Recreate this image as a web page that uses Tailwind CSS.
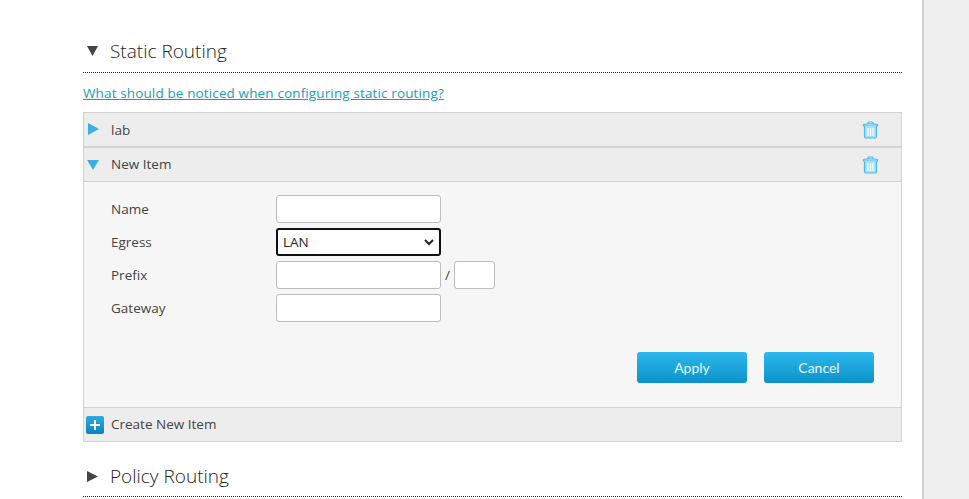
<!DOCTYPE html>
<html>
<head>
<script src="https://cdn.jsdelivr.net/npm/@tailwindcss/browser@4"></script>
</head>
<body class="m-0 overflow-hidden bg-[#f0f0f0] font-['Open_Sans',sans-serif] text-[#333]">
<div class="h-[499px] w-[969px] overflow-hidden">
  <div class="h-full w-[924px] border-r-[2px] border-[#d0d0d0] bg-white pl-[83px] pt-[30px]">
    <div class="w-[819px]">
      <div class="flex h-[43px] items-center border-b border-dotted border-[#222]">
        <svg class="ml-[4px] h-[10px] w-[11px]" viewBox="0 0 11 10"><path d="M0 0H11L5.500 10Z" fill="#444"/></svg>
        <span class="ml-[12px] text-[19px] font-light text-[#222]">Static Routing</span>
      </div>
      <a class="mt-[11px] block h-[18px] text-[13.500px] leading-[18px] tracking-[0.13px] text-[#1b9cb8] underline">What should be noticed when configuring static routing?</a>
      <div class="mt-[10px] border border-[#d2d2d2]">
        <div class="flex h-[35px] items-center border-b-[2px] border-[#d2d2d2] bg-[#ededed]">
          <svg class="mb-[2px] ml-[4px] h-[12px] w-[11px]" viewBox="0 0 11 12"><path d="M0 0L11 6L0 12Z" fill="#3cb0e4"/></svg>
          <span class="ml-[12px] pt-[2px] text-[13.500px] text-[#444]">lab</span>
          <svg class="ml-auto mr-[22px] h-[18px] w-[17px]" viewBox="0 0 17 18" fill="none" stroke="#4fb9e6" stroke-width="1.200"><path d="M1 4H16M6 3.500V2Q6 1 7 1H10Q11 1 11 2V3.500" /><path d="M1.500 3.500Q8.500 2 15.500 3.500V5H1.500Z" fill="#c4e9f8"/><path d="M2.500 5V15.500Q2.500 17 4 17H13Q14.500 17 14.500 15.500V5" fill="#a9e0f7"/><path d="M6 7V15M8.500 7V15M11 7V15" stroke="#fff"/></svg>
        </div>
        <div class="flex h-[34px] items-center border-b border-[#d2d2d2] bg-[#ededed]">
          <svg class="ml-[3px] h-[10px] w-[12px]" viewBox="0 0 12 10"><path d="M0 0H12L6 10Z" fill="#3cb0e4"/></svg>
          <span class="ml-[12px] text-[13.500px] text-[#444]">New Item</span>
          <svg class="ml-auto mr-[22px] h-[18px] w-[17px]" viewBox="0 0 17 18" fill="none" stroke="#4fb9e6" stroke-width="1.200"><path d="M1 4H16M6 3.500V2Q6 1 7 1H10Q11 1 11 2V3.500" /><path d="M1.500 3.500Q8.500 2 15.500 3.500V5H1.500Z" fill="#c4e9f8"/><path d="M2.500 5V15.500Q2.500 17 4 17H13Q14.500 17 14.500 15.500V5" fill="#a9e0f7"/><path d="M6 7V15M8.500 7V15M11 7V15" stroke="#fff"/></svg>
        </div>
        <div class="h-[226px] border-b border-[#d2d2d2] bg-[#f6f6f6] pl-[27px] pt-[13px]">
          <div class="grid grid-cols-[165px_1fr] gap-y-[5px] text-[13.500px] text-[#444]">
            <div class="flex h-[28px] items-center pt-[1px]">Name</div>
            <div><div class="h-[28px] w-[165px] rounded-[3px] border border-[#bdbdbd] bg-white"></div></div>
            <div class="flex h-[28px] items-center pt-[1px]">Egress</div>
            <div class="flex h-[28px] w-[165px] items-center justify-between rounded-[3px] border-[2px] border-[#111] bg-white pl-[5px] pr-[5px] text-[#222]">
              <span>LAN</span>
              <svg class="h-[7px] w-[10px]" viewBox="0 0 10 7" fill="none" stroke="#222" stroke-width="2"><path d="M1 1L5 5L9 1"/></svg>
            </div>
            <div class="flex h-[28px] items-center pt-[1px]">Prefix</div>
            <div class="flex items-center">
              <div class="h-[28px] w-[165px] rounded-[3px] border border-[#bdbdbd] bg-white"></div>
              <span class="w-[13px] text-center">/</span>
              <div class="h-[28px] w-[41px] rounded-[3px] border border-[#bdbdbd] bg-white"></div>
            </div>
            <div class="flex h-[28px] items-center pt-[1px]">Gateway</div>
            <div><div class="h-[28px] w-[165px] rounded-[3px] border border-[#bdbdbd] bg-white"></div></div>
          </div>
          <div class="mt-[30px] flex justify-end gap-[17px] pr-[27px] font-['Lato',sans-serif] text-[14px] text-[#e8f8ff]">
            <button class="h-[31px] w-[110px] rounded-[3px] bg-gradient-to-b from-[#2cb8ee] to-[#0a93c9]">Apply</button>
            <button class="h-[31px] w-[110px] rounded-[3px] bg-gradient-to-b from-[#2cb8ee] to-[#0a93c9]">Cancel</button>
          </div>
        </div>
        <div class="flex h-[33px] items-center bg-[#ededed]">
          <div class="ml-[2px] flex h-[18px] w-[18px] items-center justify-center rounded-[2px] bg-gradient-to-b from-[#2cabe2] to-[#0d83bf]">
            <svg class="h-[10px] w-[10px]" viewBox="0 0 10 10"><path d="M4 0H6V4H10V6H6V10H4V6H0V4H4Z" fill="#fff"/></svg>
          </div>
          <span class="ml-[7px] text-[13.500px] text-[#444]">Create New Item</span>
        </div>
      </div>
      <div class="mt-[17px] flex h-[38px] items-center border-b border-dotted border-[#222] pb-[3px]">
        <svg class="ml-[4px] h-[11px] w-[11px]" viewBox="0 0 11 11"><path d="M0 0L11 5.500L0 11Z" fill="#444"/></svg>
        <span class="ml-[12px] text-[19px] font-light text-[#222]">Policy Routing</span>
      </div>
    </div>
  </div>
</div>
</body>
</html>
